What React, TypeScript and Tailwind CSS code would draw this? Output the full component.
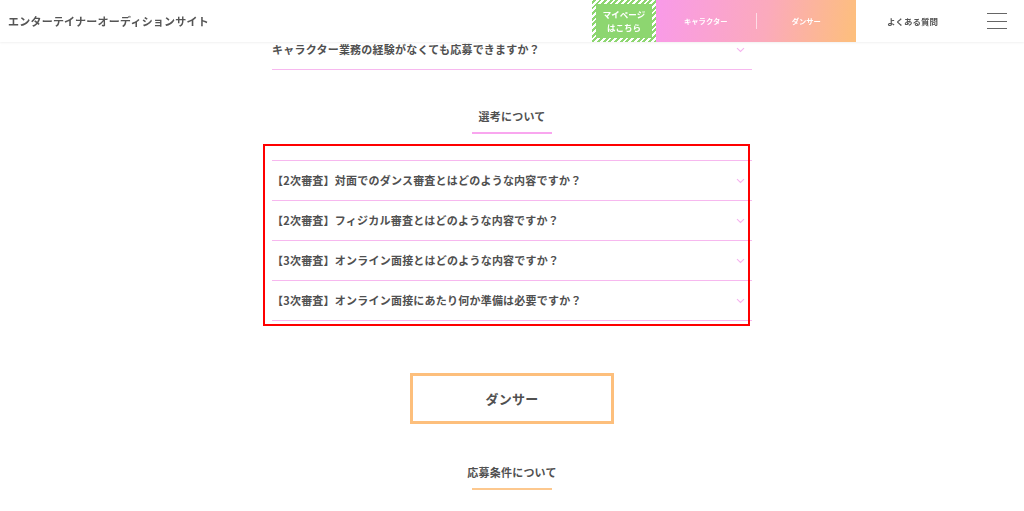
import React from 'react';

const Chevron = () => (
  <svg width="9" height="6" viewBox="0 0 9 6" className="mr-[7px] mt-[1px]">
    <path d="M1 1.2 L4.5 4.5 L8 1.2" fill="none" stroke="#f6b3ef" strokeWidth="1.1" />
  </svg>
);

const Divider = () => <div className="h-px bg-[#f7b8ef]" />;

const QuestionRow: React.FC<{ text: string }> = ({ text }) => (
  <>
    <div className="flex h-[39px] items-center justify-between">
      <span className="text-[11px] font-bold leading-none tracking-[0.02em] text-[#505050]">{text}</span>
      <Chevron />
    </div>
    <Divider />
  </>
);

const SectionTitle: React.FC<{ text: string; line: string }> = ({ text, line }) => (
  <div className="flex flex-col items-center">
    <h2 className="whitespace-nowrap text-[11px] font-bold leading-[16px] tracking-[0.02em]">{text}</h2>
    <span className={`mt-[8px] h-[2px] w-[80px] ${line}`} />
  </div>
);

const questions = [
  '【2次審査】対面でのダンス審査とはどのような内容ですか？',
  '【2次審査】フィジカル審査とはどのような内容ですか？',
  '【3次審査】オンライン面接とはどのような内容ですか？',
  '【3次審査】オンライン面接にあたり何か準備は必要ですか？',
];

export default function App() {
  return (
    <div className="relative h-[511px] overflow-hidden bg-white font-['Noto_Sans_CJK_JP','Noto_Sans',sans-serif] text-[#505050]">
      {/* Fixed header */}
      <header className="fixed inset-x-0 top-0 z-20 flex h-[42px] items-center justify-between bg-white shadow-[0_1px_2px_rgba(0,0,0,0.06)]">
        <h1 className="pl-2 text-[11px] font-bold leading-none tracking-[0.02em] text-[#555]">エンターテイナーオーディションサイト</h1>
        <div className="flex h-full items-center">
          <div className="h-full w-[64px] bg-[repeating-linear-gradient(-45deg,#8dd670_0px,#8dd670_2px,#ffffff_2px,#ffffff_4px)] p-[4px]">
            <div className="flex h-full flex-col items-center justify-center bg-[#8dd670] text-[8.5px] font-bold leading-[13px] text-white">
              <span>マイページ</span>
              <span>はこちら</span>
            </div>
          </div>
          <div className="flex h-full w-[200px] items-center bg-[linear-gradient(100deg,#f99ae9_0%,#fbaabc_55%,#fdbf7b_100%)] text-[7.3px] font-bold text-white">
            <span className="flex-1 text-center">キャラクター</span>
            <span className="h-[16px] w-px bg-white/60" />
            <span className="flex-1 text-center">ダンサー</span>
          </div>
          <div className="w-[113px] text-center text-[8.5px] font-bold text-[#555]">よくある質問</div>
          <div className="ml-[18px] mr-[17px] flex w-[20px] flex-col gap-[6.5px]">
            <span className="h-px bg-[#666]" />
            <span className="h-px bg-[#666]" />
            <span className="h-px bg-[#666]" />
          </div>
        </div>
      </header>

      <main className="flex flex-col items-center pt-[30px]">
        <div className="w-[480px]">
          <QuestionRow text="キャラクター業務の経験がなくても応募できますか？" />

          <div className="mt-[38px]">
            <SectionTitle text="選考について" line="bg-[#f9a6ef]" />
          </div>

          <div className="mt-[26px]">
            <Divider />
            {questions.map((q) => (
              <QuestionRow key={q} text={q} />
            ))}
          </div>
        </div>

        <div className="mt-[52px] flex h-[51px] w-[204px] items-center justify-center border-[3px] border-[#fdbf7c] text-[13px] font-bold tracking-[0.02em]">
          ダンサー
        </div>

        <div className="mt-[40px]">
          <SectionTitle text="応募条件について" line="bg-[#fdc88e]" />
        </div>
      </main>

      {/* highlight annotation */}
      <div className="pointer-events-none absolute left-[263px] top-[144px] h-[182px] w-[487px] border-2 border-[#ff0000]" />
    </div>
  );
}
